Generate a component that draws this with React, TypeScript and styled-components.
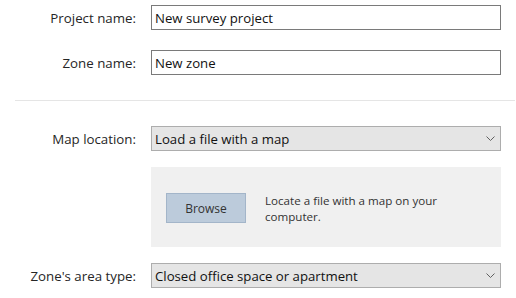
import React from 'react';
import styled, { createGlobalStyle } from 'styled-components';

const GlobalStyle = createGlobalStyle`
  html, body {
    margin: 0;
    padding: 0;
    background: #ffffff;
  }
  body {
    font-family: "Open Sans", "Noto Sans", "Liberation Sans", sans-serif;
    font-size: 13px;
    color: #1f1f1f;
  }
`;

const Form = styled.div`
  width: 516px;
  height: 298px;
  padding-top: 5px;
  box-sizing: border-box;
  display: flex;
  flex-direction: column;
`;

const Row = styled.div<{ top?: number }>`
  display: grid;
  grid-template-columns: 136px 350px;
  column-gap: 15px;
  align-items: center;
  margin-top: ${p => p.top ?? 0}px;
`;

const Label = styled.label`
  text-align: right;
  color: #262626;
  font-size: 13.3px;
  white-space: nowrap;
`;

const TextBox = styled.div`
  height: 25px;
  box-sizing: border-box;
  border: 1px solid #7a7a7a;
  background: #ffffff;
  padding: 0 3px;
  display: flex;
  align-items: center;
  color: #111111;
  font-size: 13.2px;
`;

const Select = styled.div`
  height: 25px;
  box-sizing: border-box;
  border: 1px solid #adadad;
  background: #e5e5e5;
  padding: 0 5px 0 3px;
  display: flex;
  align-items: center;
  justify-content: space-between;
  color: #111111;
  font-size: 13.2px;
`;

const Chevron = () => (
  <svg width="9" height="5" viewBox="0 0 9 5">
    <path d="M0.5 0.5 L4.5 4.5 L8.5 0.5" fill="none" stroke="#606060" strokeWidth="1" />
  </svg>
);

const Separator = styled.div`
  margin: 25px 1px 0 15px;
  height: 1px;
  background: #e5e5e5;
`;

const Panel = styled.div`
  grid-column: 2;
  height: 80px;
  background: #f0f0f0;
  display: flex;
  align-items: flex-start;
  gap: 19px;
  padding: 26px 0 0 15px;
  box-sizing: border-box;
`;

const Button = styled.div`
  width: 80px;
  height: 30px;
  box-sizing: border-box;
  border: 1px solid #a3b5c9;
  background: #bccbdb;
  display: flex;
  align-items: center;
  justify-content: center;
  color: #333333;
  font-size: 12px;
  flex-shrink: 0;
`;

const Hint = styled.div`
  width: 185px;
  color: #333333;
  font-size: 11.6px;
  line-height: 16px;
`;

export default function App() {
  return (
    <>
      <GlobalStyle />
      <Form>
        <Row>
          <Label>Project name:</Label>
          <TextBox>New survey project</TextBox>
        </Row>
        <Row top={20}>
          <Label>Zone name:</Label>
          <TextBox>New zone</TextBox>
        </Row>
        <Separator />
        <Row top={25}>
          <Label>Map location:</Label>
          <Select>
            <span>Load a file with a map</span>
            <Chevron />
          </Select>
        </Row>
        <Row top={16}>
          <Panel>
            <Button>Browse</Button>
            <Hint>Locate a file with a map on your computer.</Hint>
          </Panel>
        </Row>
        <Row top={16}>
          <Label>Zone's area type:</Label>
          <Select>
            <span>Closed office space or apartment</span>
            <Chevron />
          </Select>
        </Row>
      </Form>
    </>
  );
}
